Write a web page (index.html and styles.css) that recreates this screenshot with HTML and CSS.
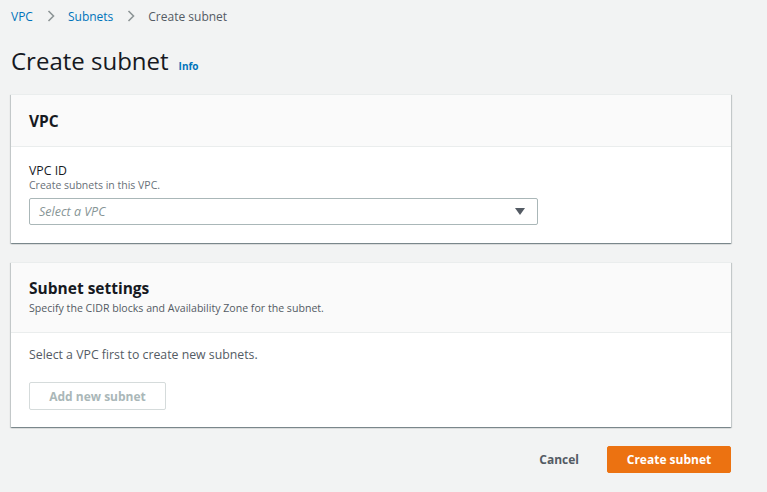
FILE: index.html
```html
<!DOCTYPE html>
<html>
<head>
<meta charset="utf-8">
<link rel="stylesheet" href="styles.css">
</head>
<body>
<div class="page">
  <nav class="crumbs">
    <a class="crumb-link">VPC</a>
    <svg class="chev" width="8" height="12" viewBox="0 0 8 12"><path d="M1.5 1 L6.5 6 L1.5 11" fill="none" stroke="#8d9596" stroke-width="1.6"/></svg>
    <a class="crumb-link">Subnets</a>
    <svg class="chev" width="8" height="12" viewBox="0 0 8 12"><path d="M1.5 1 L6.5 6 L1.5 11" fill="none" stroke="#8d9596" stroke-width="1.6"/></svg>
    <span class="crumb-current">Create subnet</span>
  </nav>
  <div class="title-row">
    <h1 class="title">Create subnet</h1>
    <a class="info">Info</a>
  </div>

  <section class="card card-vpc">
    <div class="card-head">
      <h2 class="card-title">VPC</h2>
    </div>
    <div class="card-body">
      <div class="field-label">VPC ID</div>
      <div class="field-desc">Create subnets in this VPC.</div>
      <div class="select">
        <span class="placeholder">Select a VPC</span>
        <svg class="caret" width="10" height="8" viewBox="0 0 10 8"><path d="M0 0 H10 L5 7 Z" fill="#545b64"/></svg>
      </div>
    </div>
  </section>

  <section class="card card-subnet">
    <div class="card-head head-tall">
      <h2 class="card-title">Subnet settings</h2>
      <div class="card-desc">Specify the CIDR blocks and Availability Zone for the subnet.</div>
    </div>
    <div class="card-body body-subnet">
      <div class="body-text">Select a VPC first to create new subnets.</div>
      <button class="btn-disabled">Add new subnet</button>
    </div>
  </section>

  <div class="actions">
    <button class="btn-link">Cancel</button>
    <button class="btn-primary">Create subnet</button>
  </div>
</div>
</body>
</html>
```

FILE: styles.css
```css
* { box-sizing: border-box; }
html, body { margin: 0; padding: 0; }
body {
  background: #f2f3f3;
  font-family: "Open Sans", "Noto Sans", sans-serif;
  color: #16191f;
  width: 767px;
  height: 492px;
  overflow: hidden;
}
.page {
  padding: 7px 36px 0 11px;
}
.crumbs {
  display: flex;
  align-items: center;
  height: 18px;
  font-size: 12px;
}
.crumb-link { color: #0073bb; }
.chev { margin: 0 13px 0 14px; }
.crumb-current { color: #545b64; }
.title-row {
  display: flex;
  align-items: baseline;
  margin-top: 21px;
  height: 40px;
}
.title {
  margin: 0;
  font-weight: 400;
  font-size: 24px;
  line-height: 30px;
}
.info {
  margin-left: 10px;
  font-size: 10px;
  font-weight: 700;
  color: #0073bb;
}
.card {
  background: #fff;
  box-shadow: 0 1px 1px 0 rgba(0,28,36,0.3), 1px 1px 1px 0 rgba(0,28,36,0.15), -1px 1px 1px 0 rgba(0,28,36,0.15);
  border-top: 1px solid #eaeded;
}
.card-vpc { margin-top: 8px; }
.card-subnet { margin-top: 19px; }
.card-head {
  background: #fafafa;
  border-bottom: 1px solid #eaeded;
  padding: 0 18px;
  height: 52px;
  display: flex;
  flex-direction: column;
  justify-content: center;
}
.head-tall { height: 70px; padding-bottom: 3px; }
.card-title {
  margin: 0;
  font-size: 15.5px;
  font-weight: 700;
  line-height: 20px;
}
.card-desc {
  font-size: 10.6px;
  color: #545b64;
  line-height: 14px;
  margin-top: 3px;
}
.card-body {
  padding: 16px 18px 18px;
}
.field-label {
  font-size: 12.3px;
  line-height: 16px;
}
.field-desc {
  font-size: 10.5px;
  color: #687078;
  line-height: 13px;
}
.select {
  margin-top: 6px;
  width: 509px;
  height: 27px;
  border: 1px solid #aab7b8;
  border-radius: 2px;
  display: flex;
  align-items: center;
  justify-content: space-between;
  padding: 0 12px 0 9px;
}
.placeholder {
  font-style: italic;
  font-size: 12.5px;
  color: #879596;
}
.body-subnet { padding-top: 14px; padding-bottom: 17px; }
.body-text {
  font-size: 12.3px;
  line-height: 16px;
  color: #545b64;
}
.btn-disabled {
  display: block;
  margin-top: 19px;
  width: 137px;
  height: 28px;
  background: #fff;
  border: 1px solid #d5dbdb;
  border-radius: 2px;
  color: #aab7b8;
  font-family: inherit;
  font-size: 12px;
  font-weight: 700;
}
.actions {
  display: flex;
  justify-content: flex-end;
  align-items: center;
  margin-top: 19px;
  gap: 28px;
}
.btn-link {
  background: none;
  border: none;
  color: #545b64;
  font-family: inherit;
  font-size: 12px;
  font-weight: 700;
  padding: 0;
}
.btn-primary {
  width: 124px;
  height: 27px;
  background: #ec7211;
  border: 1px solid #ec7211;
  border-radius: 2px;
  color: #fff;
  font-family: inherit;
  font-size: 12px;
  font-weight: 700;
}
```
